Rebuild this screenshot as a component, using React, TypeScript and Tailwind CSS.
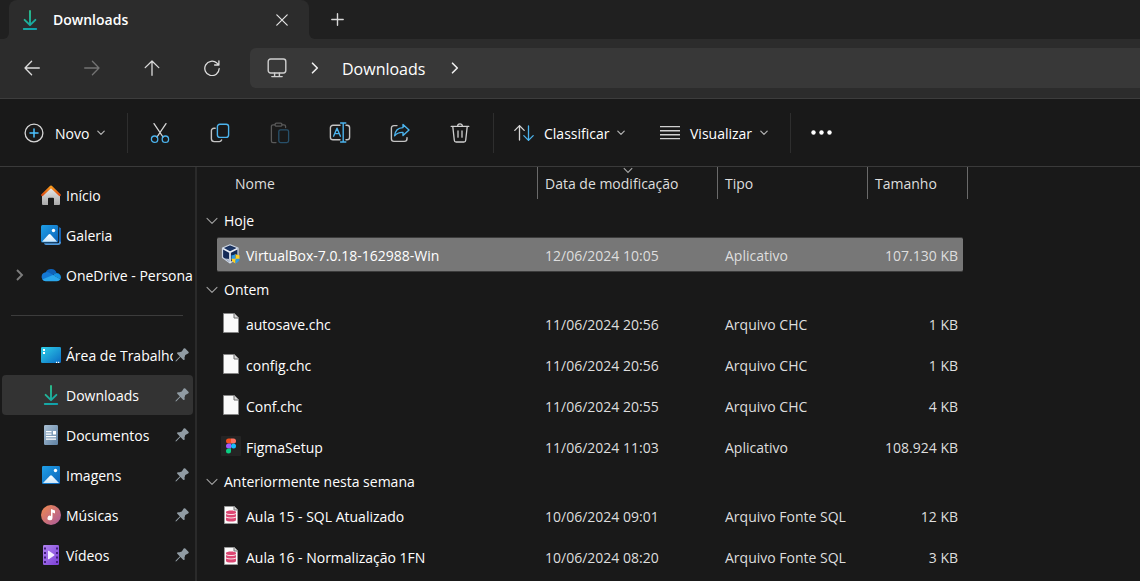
import React, { useState } from "react";

type IconProps = { className?: string };

const line = {
  fill: "none",
  strokeLinecap: "round" as const,
  strokeLinejoin: "round" as const,
};

/* ---------- navigation and toolbar icons ---------- */

const BackIcon = () => (
  <svg width="16" height="16" viewBox="0 0 16 16" stroke="currentColor" strokeWidth="1.3" {...line}>
    <path d="M15.3 8H1M7.6 1.2 1 8l6.6 6.8" />
  </svg>
);
const ForwardIcon = () => (
  <svg width="16" height="16" viewBox="0 0 16 16" stroke="currentColor" strokeWidth="1.3" {...line}>
    <path d="M.7 8H15M8.4 1.2 15 8l-6.6 6.8" />
  </svg>
);
const UpIcon = () => (
  <svg width="16" height="16" viewBox="0 0 16 16" stroke="currentColor" strokeWidth="1.3" {...line}>
    <path d="M8 15.3V1M1.2 7.6 8 1l6.8 6.6" />
  </svg>
);
const RefreshIcon = () => (
  <svg width="16" height="16" viewBox="0 0 16 16" stroke="currentColor" strokeWidth="1.3" {...line}>
    <path d="M15.2 8.6A7.2 7.2 0 1 1 12.9 3.1L14.7 4.9M14.9 .8V5H10.6" />
  </svg>
);
const MonitorIcon = () => (
  <svg width="20" height="20" viewBox="0 0 20 20" stroke="#cfcfcf" strokeWidth="1.4" {...line}>
    <rect x="1.2" y="1" width="17.6" height="14" rx="2.4" />
    <path d="M7.6 15.2v2.8M12.4 15.2v2.8M4.8 18.6h10.4" />
  </svg>
);
const CrumbChevron = () => (
  <svg width="8" height="12" viewBox="0 0 8 12" stroke="#f0f0f0" strokeWidth="1.6" {...line}>
    <path d="M1.5 1.2 6.3 6l-4.8 4.8" />
  </svg>
);
const CloseIcon = () => (
  <svg width="12" height="12" viewBox="0 0 12 12" stroke="#e6e6e6" strokeWidth="1.2" {...line}>
    <path d="M.8.8l10.4 10.4M11.2.8.8 11.2" />
  </svg>
);
const PlusIcon = () => (
  <svg width="13" height="13" viewBox="0 0 13 13" stroke="#d8d8d8" strokeWidth="1.4" {...line}>
    <path d="M6.5.8v11.4M.8 6.5h11.4" />
  </svg>
);
const SmallChevron = () => (
  <svg width="8" height="6" viewBox="0 0 8 6" stroke="#b4b4b4" strokeWidth="1.2" {...line}>
    <path d="M.8 1.2 4 4.4l3.2-3.2" />
  </svg>
);
const GroupChevron = () => (
  <svg width="12" height="8" viewBox="0 0 12 8" stroke="#a0a0a0" strokeWidth="1.1" {...line}>
    <path d="M1 1.3 6 6.3l5-5" />
  </svg>
);
const NewIcon = () => (
  <svg width="20" height="20" viewBox="0 0 20 20" strokeWidth="1.3" {...line}>
    <circle cx="10" cy="10" r="8.9" stroke="#d6d6d6" />
    <path d="M10 6v8M6 10h8" stroke="#4cc2ff" strokeWidth="1.5" />
  </svg>
);
const CutIcon = () => (
  <svg width="20" height="22" viewBox="0 0 20 22" strokeWidth="1.3" {...line}>
    <path d="M4 1.6 13 15M16 1.6 7 15" stroke="#d6d6d6" />
    <circle cx="4.6" cy="17.2" r="3.2" stroke="#4cb4ee" />
    <circle cx="15.4" cy="17.2" r="3.2" stroke="#4cb4ee" />
  </svg>
);
const CopyIcon = () => (
  <svg width="20" height="20" viewBox="0 0 20 20" strokeWidth="1.4" {...line}>
    <path d="M5.2 5.2H4A2.6 2.6 0 0 0 1.4 7.8v8A2.8 2.8 0 0 0 4.2 18.6h5A2.5 2.5 0 0 0 11.6 17" stroke="#c4c4c4" />
    <rect x="7.4" y="1.2" width="11.2" height="13.2" rx="2.4" stroke="#4cb4ee" />
  </svg>
);
const PasteIcon = () => (
  <svg width="20" height="22" viewBox="0 0 20 22" strokeWidth="1.3" {...line}>
    <path d="M5 2.8H3A1.6 1.6 0 0 0 1.4 4.4V19A1.6 1.6 0 0 0 3 20.6H6M12 2.8h2A1.6 1.6 0 0 1 15.6 4.4V5.5" stroke="#595959" />
    <rect x="5" y="1.2" width="7" height="3" rx="1.5" stroke="#595959" />
    <rect x="8.8" y="7.8" width="9.8" height="12.8" rx="1.8" stroke="#28506a" />
  </svg>
);
const RenameIcon = () => (
  <svg width="22" height="22" viewBox="0 0 22 22" strokeWidth="1.4" {...line}>
    <path d="M11 3.2H4A2.6 2.6 0 0 0 1.4 5.8v9.400A2.6 2.6 0 0 0 4 17.8h7M17 3.2h1A2.6 2.6 0 0 1 20.6 5.8v9.4A2.6 2.6 0 0 1 18 17.8h-1" stroke="#c4c4c4" />
    <path d="M4.600 14.200 8 6.200l3.400 8M5.800 11.600h4.400M14.200 1.200v18.600M11.600 1h5.200M11.600 20h5.200" stroke="#4cb4ee" />
  </svg>
);
const ShareIcon = () => (
  <svg width="22" height="20" viewBox="0 0 22 20" strokeWidth="1.4" {...line}>
    <path d="M8 2.6H5A2.6 2.6 0 0 0 2.4 5.2v10.6A2.6 2.6 0 0 0 5 18.4h10.4A2.6 2.6 0 0 0 18 15.8V14.6" stroke="#c4c4c4" />
    <path d="M14 1.4 20 7l-6 5.6V9.4c-3.6-.2-6.2.8-8.4 3.4.5-4.8 3.4-8 8.4-8.2z" stroke="#4cb4ee" />
  </svg>
);
const TrashIcon = () => (
  <svg width="20" height="20" viewBox="0 0 20 20" stroke="#d0d0d0" strokeWidth="1.3" {...line}>
    <path d="M1.2 3.4h17.6M7.6 3.2a2.4 2.4 0 0 1 4.8 0M2.8 3.6l1.5 13.6A1.9 1.9 0 0 0 6.2 19h7.6a1.9 1.9 0 0 0 1.9-1.8L17.2 3.6M8 8v6.2M12 8v6.2" />
  </svg>
);
const SortIcon = () => (
  <svg width="20" height="18" viewBox="0 0 20 18" strokeWidth="1.3" {...line}>
    <path d="M5.5 16V1.6M.8 6.4l4.7-4.8 4.7 4.8" stroke="#d6d6d6" />
    <path d="M14.5 2v14.4M9.8 11.6l4.7 4.8 4.7-4.8" stroke="#4cb4ee" />
  </svg>
);
const ViewIcon = () => (
  <svg width="20" height="14" viewBox="0 0 20 14" fill="#d0d0d0">
    <path d="M0 0h20v1.2H0zM0 4h20v1.4H0zM0 8h20v1.4H0zM0 12h20v1.3H0z" />
  </svg>
);
const MoreIcon = () => (
  <svg width="21" height="5" viewBox="0 0 21 5" fill="#fff">
    <circle cx="2.5" cy="2.5" r="2.2" />
    <circle cx="10.5" cy="2.5" r="2.2" />
    <circle cx="18.5" cy="2.5" r="2.2" />
  </svg>
);

/* ---------- place icons ---------- */

const DownloadIcon = ({ className }: IconProps) => (
  <svg className={className} width="20" height="20" viewBox="0 0 20 20" {...line}>
    <defs>
      <linearGradient id="dl" gradientUnits="userSpaceOnUse" x1="4" y1="0" x2="15" y2="20">
        <stop offset="0" stopColor="#2fc586" />
        <stop offset="1" stopColor="#0f9fae" />
      </linearGradient>
    </defs>
    <path d="M10 1v13M4.6 9.8 10 15.2l5.4-5.4M3.8 19h12.4" stroke="url(#dl)" strokeWidth="1.9" />
  </svg>
);
const HomeIcon = () => (
  <svg width="20" height="20" viewBox="0 0 20 20">
    <defs>
      <linearGradient id="hm" x1="0" y1="0" x2="0" y2="1">
        <stop offset="0" stopColor="#ececec" />
        <stop offset="1" stopColor="#a9a9a9" />
      </linearGradient>
      <linearGradient id="rf" x1="0" y1="0" x2="0" y2="1">
        <stop offset="0" stopColor="#f99a1c" />
        <stop offset="1" stopColor="#dc4b10" />
      </linearGradient>
    </defs>
    <path d="M1 9.5 10 2l9 7.5V19a1 1 0 0 1-1 1h-5v-6.2a1 1 0 0 0-1-1H8a1 1 0 0 0-1 1V20H2a1 1 0 0 1-1-1z" fill="url(#hm)" />
    <path d="M1.3 10 10 1.7 18.7 10" fill="none" stroke="url(#rf)" strokeWidth="2.4" strokeLinecap="round" strokeLinejoin="round" />
  </svg>
);
const PhotoDefs = () => (
  <defs>
    <linearGradient id="ph" x1="0" y1="0" x2="1" y2="1">
      <stop offset="0" stopColor="#1fa0e8" />
      <stop offset="1" stopColor="#0b62b8" />
    </linearGradient>
    <linearGradient id="mt" x1="0" y1="0" x2="0" y2="1">
      <stop offset="0" stopColor="#ffffff" />
      <stop offset="1" stopColor="#c9e6fa" />
    </linearGradient>
  </defs>
);
const GalleryIcon = () => (
  <svg width="20" height="20" viewBox="0 0 20 20">
    <PhotoDefs />
    <path d="M18.2 2.5a2 2 0 0 1 1.8 2V17a3 3 0 0 1-3 3H5a2 2 0 0 1-2-1.7h13.7a1.5 1.5 0 0 0 1.5-1.5z" fill="#4f9be0" />
    <path d="M18.2 2.5a2 2 0 0 1 1.8 2V17l-1.8-1z" fill="#155fae" />
    <rect width="17.2" height="17.5" rx="1.5" fill="url(#ph)" />
    <circle cx="12.5" cy="5.5" r="1.7" fill="#fff" />
    <path d="M1 16.8 7.6 9.6a1.4 1.4 0 0 1 2 0l6.6 7.2z" fill="url(#mt)" />
  </svg>
);
const PictureIcon = () => (
  <svg width="20" height="20" viewBox="0 0 20 20">
    <PhotoDefs />
    <rect x="1" y="1" width="18" height="18" rx="1.2" fill="url(#ph)" />
    <circle cx="14.5" cy="5.5" r="1.7" fill="#fff" />
    <path d="M2 18 9 10.8a1.4 1.4 0 0 1 2 0L18 18z" fill="url(#mt)" />
  </svg>
);
const CloudIcon = () => (
  <svg width="20" height="14" viewBox="0 0 20 14">
    <path d="M4.7 4.2A6 6 0 0 1 15.6 5L9 8.5z" fill="#0f62b8" />
    <path d="M4.7 4.2a4.6 4.6 0 0 1 3.7.6l5 3-9.8 5.1A4.5 4.5 0 0 1 4.7 4.2z" fill="#1478d4" />
    <path d="M15.6 5a4.3 4.3 0 0 1 3.8 6.3L12 7.2A6 6 0 0 1 15.6 5z" fill="#1590e0" />
    <path d="M12 7l7.5 4.3A4.1 4.1 0 0 1 16 13.3H4.7A4.5 4.5 0 0 1 1.2 11.5z" fill="#2aa7ec" />
  </svg>
);
const DesktopIcon = () => (
  <svg width="20" height="16" viewBox="0 0 20 16">
    <defs>
      <linearGradient id="dk" x1="0" y1="0" x2="1" y2="1">
        <stop offset="0" stopColor="#2fd0e8" />
        <stop offset="1" stopColor="#0b6cc4" />
      </linearGradient>
    </defs>
    <rect width="20" height="16" rx="1.3" fill="url(#dk)" />
    <path d="M2 2h2v2H2zM2 5h2v2H2zM15 14.8h1.2V16H15zM17 14.8h1.2V16H17z" fill="#fff" />
  </svg>
);
const DocumentsIcon = () => (
  <svg width="20" height="20" viewBox="0 0 20 20">
    <defs>
      <linearGradient id="dc" x1="0" y1="0" x2="1" y2="1">
        <stop offset="0" stopColor="#a9bfd3" />
        <stop offset="1" stopColor="#5f82a4" />
      </linearGradient>
    </defs>
    <rect x="3" width="14" height="20" rx="1.2" fill="url(#dc)" />
    <path d="M5 6h5.5v1.2H5zM5 8.5h5.5v1.2H5zM5 11h10v1.2H5zM5 13.5h10v1.2H5zM12 6h3v3.5h-3z" fill="#fff" />
  </svg>
);
const MusicIcon = () => (
  <svg width="20" height="20" viewBox="0 0 20 20">
    <defs>
      <linearGradient id="ms" x1="0" y1="0" x2="1" y2="1">
        <stop offset="0.1" stopColor="#ea8655" />
        <stop offset="1" stopColor="#a9599f" />
      </linearGradient>
    </defs>
    <circle cx="10" cy="10" r="10" fill="url(#ms)" />
    <path d="M10 4l4 1.6v2.8l-2.5-1V13a2.5 2.3 0 1 1-1.5-2.1z" fill="#fff" />
  </svg>
);
const VideoIcon = () => (
  <svg width="20" height="20" viewBox="0 0 20 20">
    <defs>
      <linearGradient id="vd" x1="0" y1="0" x2="1" y2="1">
        <stop offset="0" stopColor="#b083ef" />
        <stop offset="1" stopColor="#7c3fd8" />
      </linearGradient>
    </defs>
    <rect x="2" width="16" height="20" rx="1.2" fill="url(#vd)" />
    <path d="M3 2.5h2v2H3zM3 7h2v2H3zM3 11.5h2v2H3zM3 16h2v2H3zM15 2.5h2v2h-2zM15 7h2v2h-2zM15 11.5h2v2h-2zM15 16h2v2h-2z" fill="#421d7c" />
    <path d="M7 6.2v7.6a.5.5 0 0 0 .8.4L13.2 10.5a.6.6 0 0 0 0-1L7.8 5.8a.5.5 0 0 0-.8.4z" fill="#f3ecff" />
  </svg>
);
const PinIcon = () => (
  <svg width="14" height="14" viewBox="0 0 14 14" fill="#909ba3" className="shrink-0">
    <path d="M8.7.6a1.1 1.1 0 0 1 1.6 0l3.1 3.1a1.1 1.1 0 0 1-.3 1.7L10.3 7 9.4 9.9a.8.8 0 0 1-1.3.4L5.9 8.4 1.4 13.2l-.9.3.2-1L5.2 7.9 3.2 5.7a.8.8 0 0 1 .4-1.3l3.2-1z" />
    <path d="M3 5.2 8.8 11" stroke="#909ba3" strokeWidth="1.9" strokeLinecap="round" />
  </svg>
);
const ExpandIcon = () => (
  <svg width="8" height="12" viewBox="0 0 8 12" stroke="#7d7d7d" strokeWidth="1.9" fill="none">
    <path d="M1 1l5 5-5 5" />
  </svg>
);

/* ---------- file icons ---------- */

const BlankFile = () => (
  <svg width="20" height="20" viewBox="0 0 20 20">
    <path d="M2.5.5h10.8l4.2 4.2v14.8h-15z" fill="#fafafa" stroke="#858585" />
    <path d="M13 .5v4.5h4.5" fill="#d9d9d9" stroke="#6d6d6d" />
  </svg>
);
const SqlFile = () => (
  <svg width="20" height="20" viewBox="0 0 20 20">
    <path d="M3.5 1.500h9.8l3.2 3.2v13.8h-13z" fill="#fcfcfc" stroke="#9a9a9a" />
    <path d="M13 1.5V5h3.5" fill="#ddd" stroke="#777" />
    <path d="M5 7c0-2 10-2 10 0v8c0 2-10 2-10 0z" fill="#dc4672" />
    <path d="M5 8.6c1.5 1.3 8.5 1.3 10 0M5 12c1.5 1.3 8.5 1.3 10 0" fill="none" stroke="#fbe3ea" strokeWidth="1" />
  </svg>
);
const FigmaFile = () => (
  <svg width="20" height="20" viewBox="0 0 20 20">
    <rect width="20" height="20" rx="1" fill="#242424" />
    <path d="M10 2.5H7.5a2.5 2.5 0 0 0 0 5H10z" fill="#f24e1e" />
    <path d="M10 2.5h2.5a2.5 2.5 0 0 1 0 5H10z" fill="#ff7262" />
    <path d="M10 7.5H7.5a2.5 2.5 0 0 0 0 5H10z" fill="#a259ff" />
    <circle cx="12.5" cy="10" r="2.5" fill="#1abcfe" />
    <path d="M10 12.5H7.5a2.5 2.5 0 1 0 2.5 2.5z" fill="#0acf83" />
  </svg>
);
const VirtualBoxFile = () => (
  <svg width="20" height="20" viewBox="0 0 20 20">
    <path d="M9 .8 17 4v9.5L9 19 1.5 13.5V4z" fill="#142b57" stroke="#ccd6e4" strokeWidth="1.2" strokeLinejoin="round" />
    <path d="M4 4.7 9 2.6l5.2 2.1L9 7z" fill="#1c3767" />
    <path d="M2 4.6 9 8.2l7.5-3.6M9 8.2v10.3" stroke="#e8edf5" strokeWidth="1.7" fill="none" />
    <path d="M3.5 14.5 9 18.3V15z" fill="#b9c3d3" />
    <path d="M14.5 10c-1.2 1-2.6 1.3-4 1.3V15h4z" fill="#2d9be6" />
    <path d="M14.5 10c1.2 1 2.6 1.3 4 1.3V15h-4z" fill="#ffcf1f" />
    <path d="M10.500 14.8h4V19.5c-2.4-1-4-2.5-4-4.7z" fill="#ffcf1f" />
    <path d="M18.5 14.8h-4V19.5c2.4-1 4-2.5 4-4.7z" fill="#2d9be6" />
  </svg>
);

/* ---------- data ---------- */

type Place = { name: string; icon: React.ReactNode; expandable?: boolean };

const topPlaces: Place[] = [
  { name: "Início", icon: <HomeIcon /> },
  { name: "Galeria", icon: <GalleryIcon /> },
  { name: "OneDrive - Personal", icon: <CloudIcon />, expandable: true },
];

const pinnedPlaces: Place[] = [
  { name: "Área de Trabalho", icon: <DesktopIcon /> },
  { name: "Downloads", icon: <DownloadIcon /> },
  { name: "Documentos", icon: <DocumentsIcon /> },
  { name: "Imagens", icon: <PictureIcon /> },
  { name: "Músicas", icon: <MusicIcon /> },
  { name: "Vídeos", icon: <VideoIcon /> },
];

type FileRow = { name: string; date: string; type: string; size: string; icon: React.ReactNode };

const groups: { title: string; files: FileRow[] }[] = [
  {
    title: "Hoje",
    files: [
      { name: "VirtualBox-7.0.18-162988-Win", date: "12/06/2024 10:05", type: "Aplicativo", size: "107.130 KB", icon: <VirtualBoxFile /> },
    ],
  },
  {
    title: "Ontem",
    files: [
      { name: "autosave.chc", date: "11/06/2024 20:56", type: "Arquivo CHC", size: "1 KB", icon: <BlankFile /> },
      { name: "config.chc", date: "11/06/2024 20:56", type: "Arquivo CHC", size: "1 KB", icon: <BlankFile /> },
      { name: "Conf.chc", date: "11/06/2024 20:55", type: "Arquivo CHC", size: "4 KB", icon: <BlankFile /> },
      { name: "FigmaSetup", date: "11/06/2024 11:03", type: "Aplicativo", size: "108.924 KB", icon: <FigmaFile /> },
    ],
  },
  {
    title: "Anteriormente nesta semana",
    files: [
      { name: "Aula 15 - SQL Atualizado", date: "10/06/2024 09:01", type: "Arquivo Fonte SQL", size: "12 KB", icon: <SqlFile /> },
      { name: "Aula 16 - Normalização 1FN", date: "10/06/2024 08:20", type: "Arquivo Fonte SQL", size: "3 KB", icon: <SqlFile /> },
    ],
  },
];

const tools = [
  { label: "Recortar", icon: <CutIcon /> },
  { label: "Copiar", icon: <CopyIcon /> },
  { label: "Colar", icon: <PasteIcon />, disabled: true },
  { label: "Renomear", icon: <RenameIcon /> },
  { label: "Compartilhar", icon: <ShareIcon /> },
  { label: "Excluir", icon: <TrashIcon /> },
];

/* ---------- parts ---------- */

function TabBar() {
  return (
    <div className="flex h-[39px] bg-[#2c2c2c]">
      <div className="w-[9px] rounded-br-md bg-[#202020]" />
      <div className="w-[300px] bg-[#202020]">
        <div className="flex h-full items-center rounded-t-lg bg-[#2c2c2c] pl-[11px] pr-[21px]">
          <DownloadIcon />
          <span className="ml-[13px] flex-1 font-semibold">Downloads</span>
          <button aria-label="Fechar guia"><CloseIcon /></button>
        </div>
      </div>
      <div className="flex flex-1 items-center rounded-bl-md bg-[#202020] pl-[22px]">
        <button aria-label="Nova guia"><PlusIcon /></button>
      </div>
    </div>
  );
}

function NavBar() {
  const button = "flex h-10 w-[60px] items-center justify-center text-[#dcdcdc] disabled:text-[#737373]";
  return (
    <div className="flex h-[60px] items-start border-b border-[#3d3d3d] bg-[#2c2c2c] pl-[2px] pt-[9px]">
      <button className={button} aria-label="Voltar"><BackIcon /></button>
      <button className={button} aria-label="Avançar" disabled><ForwardIcon /></button>
      <button className={button} aria-label="Acima"><UpIcon /></button>
      <button className={button} aria-label="Atualizar"><RefreshIcon /></button>
      <nav aria-label="Endereço" className="ml-2 flex h-10 flex-1 items-center rounded-l-md bg-[#383838] pl-[17px]">
        <a href="#" aria-label="Este computador"><MonitorIcon /></a>
        <span className="ml-6"><CrumbChevron /></span>
        <a href="#" className="ml-[23px] mr-[26px] pt-[2px] text-base">Downloads</a>
        <CrumbChevron />
      </nav>
    </div>
  );
}

function Toolbar() {
  return (
    <div className="flex h-[68px] items-center border-b border-[#3a3a3a]">
      <div className="flex h-10 w-32 border-r border-[#2e2e2e] pl-6">
        <button className="flex items-center"><NewIcon /><span className="ml-[11px] mr-2 pt-[2px]">Novo</span><SmallChevron /></button>
      </div>
      <div className="flex h-10 w-[366px] border-r border-[#2e2e2e] pl-[2px]">
        {tools.map((t) => (
          <button key={t.label} aria-label={t.label} disabled={t.disabled} className="flex w-[60px] items-center justify-center">
            {t.icon}
          </button>
        ))}
      </div>
      <div className="flex h-10 w-[297px] border-r border-[#2e2e2e] pl-5">
        <button className="flex w-[146px] items-center"><SortIcon /><span className="ml-[10px] mr-2 pt-[2px]">Classificar</span><SmallChevron /></button>
        <button className="flex items-center"><ViewIcon /><span className="ml-[10px] mr-2 pt-[2px]">Visualizar</span><SmallChevron /></button>
      </div>
      <button aria-label="Ver mais" className="flex h-10 items-center px-5"><MoreIcon /></button>
    </div>
  );
}

function PlaceItem({ place, pinned, active, onSelect }: { place: Place; pinned?: boolean; active: boolean; onSelect: () => void }) {
  return (
    <li>
      <a
        href="#"
        onClick={onSelect}
        aria-current={active ? "page" : undefined}
        className={`flex h-10 items-center rounded-sm ${pinned ? "gap-[2px] pr-1" : ""} ${active ? "bg-[#333333]" : ""}`}
      >
        <span className="flex min-w-0 flex-1 items-center overflow-hidden">
          <span className="flex w-[39px] shrink-0 pl-[14px]">{place.expandable && <ExpandIcon />}</span>
          <span className="flex w-5 shrink-0 justify-center">{place.icon}</span>
          <span className="ml-[5px] whitespace-nowrap pt-[2px]">{place.name}</span>
        </span>
        {pinned && <PinIcon />}
      </a>
    </li>
  );
}

function Sidebar() {
  const [current, setCurrent] = useState("Downloads");
  return (
    <nav aria-label="Locais" className="w-[197px] shrink-0 border-r-2 border-[#2a2a2a] pl-[2px] pr-[2px] pt-2">
      <ul>
        {topPlaces.map((p) => (
          <PlaceItem key={p.name} place={p} active={current === p.name} onSelect={() => setCurrent(p.name)} />
        ))}
      </ul>
      <hr className="mb-[19px] ml-[9px] mr-[10px] mt-5 border-[#3c3c3c]" />
      <ul>
        {pinnedPlaces.map((p) => (
          <PlaceItem key={p.name} place={p} pinned active={current === p.name} onSelect={() => setCurrent(p.name)} />
        ))}
      </ul>
    </nav>
  );
}

function FileList() {
  const [selected, setSelected] = useState("VirtualBox-7.0.18-162988-Win");
  const head = "h-8 border-r border-[#6a6a6a] p-0 pt-[2px] text-left font-normal text-[#dedede]";
  return (
    <main className="min-w-0 flex-1">
      <table className="w-[771px] table-fixed border-separate border-spacing-0">
        <colgroup>
          <col className="w-[341px]" />
          <col className="w-[180px]" />
          <col className="w-[150px]" />
          <col className="w-[100px]" />
        </colgroup>
        <thead>
          <tr>
            <th className={head}><button className="pl-[38px]">Nome</button></th>
            <th className={`${head} relative`} aria-sort="descending">
              <span className="absolute left-1/2 top-0 -translate-x-1/2">
                <svg width="10" height="7" viewBox="0 0 10 7" fill="none" stroke="#a8a8a8" strokeWidth="1.1">
                  <path d="M.8 1.2 5 5.4l4.2-4.2" />
                </svg>
              </span>
              <button className="pl-[7px]">Data de modificação</button>
            </th>
            <th className={head}><button className="pl-[7px]">Tipo</button></th>
            <th className={head}><button className="pl-[7px]">Tamanho</button></th>
          </tr>
          <tr aria-hidden="true"><td className="h-2 p-0" colSpan={4} /></tr>
        </thead>
        {groups.map((g) => (
          <tbody key={g.title}>
            <tr>
              <th colSpan={4} className="h-7 p-0 text-left font-normal">
                <button className="flex items-center gap-[6px] pl-[9px]"><GroupChevron />{g.title}</button>
              </th>
            </tr>
            {g.files.map((f) => {
              const on = selected === f.name;
              const cell = `flex h-[35px] items-center border-y pt-[2px] ${on ? "border-[#3c3c3c] bg-[#777777]" : "border-transparent"}`;
              return (
                <tr key={f.name} aria-selected={on} onClick={() => setSelected(f.name)} className="text-[#dedede]">
                  <td className="h-[41px] p-0 pb-[2px] pl-5">
                    <div className={`${cell} gap-[5px] whitespace-nowrap rounded-l-xs pl-1 text-white`}>
                      <span className="pb-1">{f.icon}</span>
                      {f.name}
                    </div>
                  </td>
                  <td className="p-0 pb-[2px]"><div className={`${cell} pl-[7px]`}>{f.date}</div></td>
                  <td className="p-0 pb-[2px]"><div className={`${cell} pl-[7px]`}>{f.type}</div></td>
                  <td className="p-0 pb-[2px] pr-[5px]"><div className={`${cell} justify-end rounded-r-xs pr-[5px]`}>{f.size}</div></td>
                </tr>
              );
            })}
          </tbody>
        ))}
      </table>
    </main>
  );
}

export default function App() {
  return (
    <div className="flex min-h-screen flex-col bg-[#191919] font-['Open_Sans','Noto_Sans',sans-serif] text-sm text-white">
      <TabBar />
      <NavBar />
      <Toolbar />
      <div className="flex flex-1">
        <Sidebar />
        <FileList />
      </div>
    </div>
  );
}
